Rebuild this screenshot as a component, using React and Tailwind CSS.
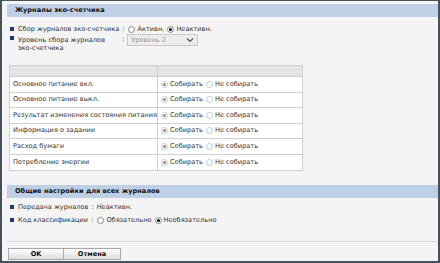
import React from "react";

const font = { fontFamily: '"DejaVu Sans", Verdana, sans-serif' };

function Radio({ checked, light }) {
  return (
    <span className={`inline-flex items-center justify-center w-[7px] h-[7px] rounded-full border ${light ? "border-[#c8c8c8]" : "border-[#8a8a8a]"} bg-white mr-[2px] shrink-0`}>
      {checked && <span className={`w-[3px] h-[3px] rounded-full ${light ? "bg-[#8a8a8a]" : "bg-black"}`} />}
    </span>
  );
}

function Bullet() {
  return <span className="inline-block w-[4px] h-[4px] bg-[#1f3a6e] mr-[4px] shrink-0" />;
}

const rows = [
  "Основное питание вкл.",
  "Основное питание выкл.",
  "Результат изменения состояния питания",
  "Информация о задании",
  "Расход бумаги",
  "Потребление энергии",
];

export default function App() {
  return (
    <div className="w-[440px] h-[263px] bg-[#48505a] pt-[1px] pl-[2px] pr-[2px] pb-[2px] text-[6.6px] leading-none text-[#333] whitespace-nowrap" style={font}>
      <div className="w-full h-full bg-[#f4f4f4] flex flex-col pt-[3px] pl-[5px]">
        <div className="h-[13px] bg-[#bfd0e6] flex items-center pl-[8px] font-bold text-[#111]">Журналы эко-счетчика</div>
        <div className="flex items-center h-[10px] mt-[7px] pl-[3px]">
          <Bullet />
          <span>Сбор журналов эко-счетчика</span>
          <span className="ml-[3px] mr-[4px]">:</span>
          <Radio />
          <span className="mr-[3px]">Активн.</span>
          <Radio checked />
          <span>Неактивн.</span>
        </div>
        <div className="flex items-start mt-[2px] pl-[3px]">
          <Bullet />
          <div className="w-[104px] leading-[8px]">Уровень сбора журналов<br />эко-счетчика</div>
          <span className="mr-[3px]">:</span>
          <div className="w-[71px] h-[12px] border border-[#c8c8c8] bg-[#ececec] flex items-center justify-between px-[3px] text-[#999] -mt-[2px]">
            <span>Уровень 2</span>
            <svg width="8" height="6" viewBox="0 0 8 6"><path d="M1 1.5 L4 4.5 L7 1.5" stroke="#555" strokeWidth="1.2" fill="none" /></svg>
          </div>
        </div>
        <div className="mt-[13px] ml-[2px] w-[294px] border border-[#d0d0d0] bg-white">
          <div className="flex h-[11px] bg-[#e4e4e4] border-b border-[#d0d0d0]">
            <div className="w-[148px] border-r border-[#d0d0d0]" />
            <div className="flex-1" />
          </div>
          {rows.map((r, i) => (
            <div key={i} className={`flex h-[15.5px] items-center ${i < rows.length - 1 ? "border-b border-[#d0d0d0]" : ""}`}>
              <div className="w-[148px] h-full flex items-center pl-[3px] border-r border-[#d0d0d0] overflow-hidden">{r}</div>
              <div className="flex-1 flex items-center pl-[3px]">
                <Radio checked light />
                <span className="mr-[3px]">Собирать</span>
                <Radio light />
                <span>Не собирать</span>
              </div>
            </div>
          ))}
        </div>
        <div className="h-[13px] bg-[#bfd0e6] flex items-center pl-[8px] font-bold text-[#111] mt-[14px]">Общие настройки для всех журналов</div>
        <div className="flex items-center h-[10px] mt-[4px] pl-[3px]">
          <Bullet />
          <span>Передача журналов</span>
          <span className="ml-[3px] mr-[3px]">:</span>
          <span>Неактивн.</span>
        </div>
        <div className="flex items-center h-[10px] mt-[3px] pl-[3px]">
          <Bullet />
          <span>Код классификации</span>
          <span className="ml-[3px] mr-[4px]">:</span>
          <Radio />
          <span className="mr-[3px]">Обязательно</span>
          <Radio checked />
          <span>Необязательно</span>
        </div>
        <div className="mt-[16px] h-[1px] bg-[#dcdcdc]" />
        <div className="flex mt-[6px] ml-[1px]">
          <button className="w-[56px] h-[12px] border border-[#a8a8a8] bg-gradient-to-b from-white to-[#dedede] font-bold text-[#111] flex items-center justify-center">OK</button>
          <button className="w-[57px] h-[12px] border border-[#a8a8a8] border-l-0 bg-gradient-to-b from-white to-[#dedede] font-bold text-[#111] flex items-center justify-center">Отмена</button>
        </div>
      </div>
    </div>
  );
}
